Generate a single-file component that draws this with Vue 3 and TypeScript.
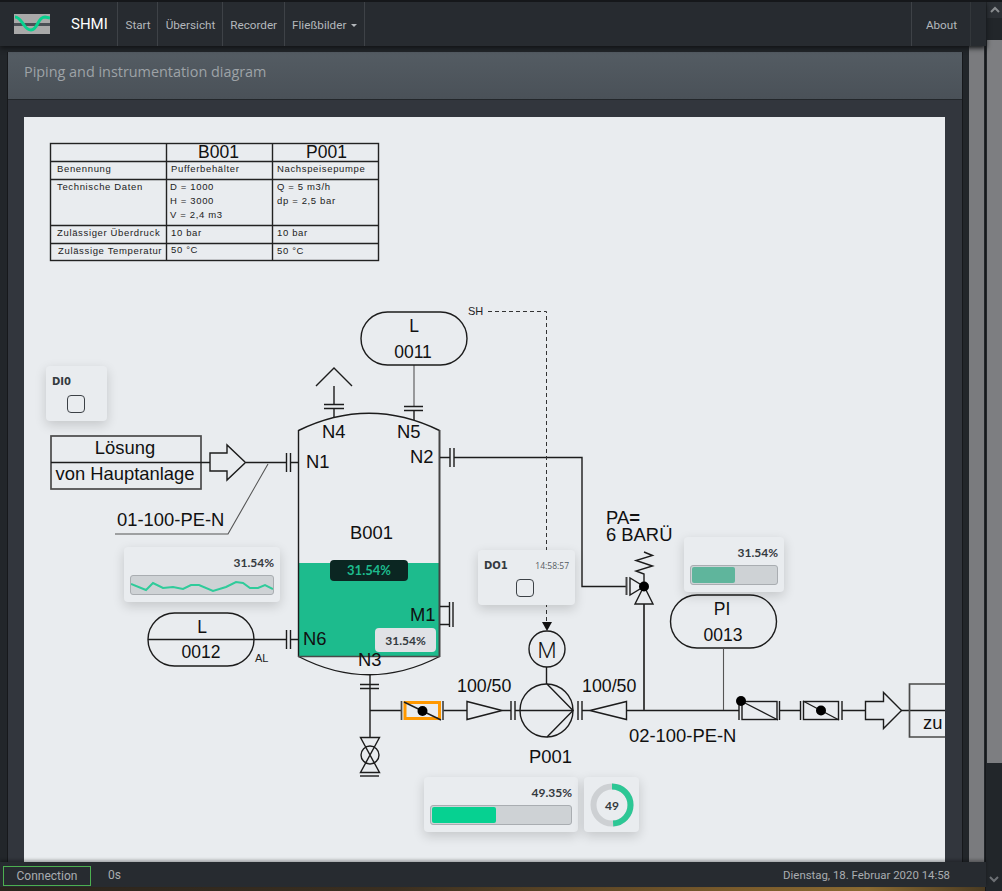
<template>
  <div class="app">
    <div class="page">
      <nav class="navbar">
        <div class="brand">
          <svg class="logo" width="36" height="20" viewBox="0 0 36 20">
            <rect width="36" height="20" fill="#a9a9a9" />
            <rect y="9" width="36" height="3" fill="#4a4f55" />
            <path d="M1 3C5 3 7 7 10 11C12 14 14 16 17 16C20 16 22 13 24 9C26 5 28 3 31 3L36 4" fill="none" stroke="#08d08e" stroke-width="3" />
          </svg>
          <span class="brand-name">SHMI</span>
        </div>
        <a v-for="item in navItems" :key="item" class="nav-item">{{ item }}</a>
        <a class="nav-item">Fließbilder<i class="caret"></i></a>
        <span class="nav-gap"></span>
        <a class="nav-item nav-about">About</a>
      </nav>

      <div class="workspace">
        <section class="card">
          <header class="card-head">Piping and instrumentation diagram</header>
          <div class="card-body">
            <div class="diagram">
              <svg class="pid" width="921" height="745" viewBox="24 117 921 745">
                <!-- datasheet table -->
                <g class="tbl">
                  <rect x="50.5" y="143.5" width="328" height="117" />
                  <path d="M50 161.5H379M50 179.5H379M50 225.5H379M50 243.5H379M166.5 143V261M272.5 143V261" />
                </g>
                <text class="big" x="198" y="158">B001</text>
                <text class="big" x="306" y="158">P001</text>
                <g class="small">
                  <text x="57" y="172">Benennung</text>
                  <text x="171" y="172">Pufferbehälter</text>
                  <text x="277" y="172">Nachspeisepumpe</text>
                  <text x="57" y="190">Technische Daten</text>
                  <text x="170" y="190">D = 1000</text>
                  <text x="170" y="204">H = 3000</text>
                  <text x="170" y="218">V = 2,4 m3</text>
                  <text x="277" y="190">Q = 5 m3/h</text>
                  <text x="277" y="204">dp = 2,5 bar</text>
                  <text x="57" y="236">Zulässiger Überdruck</text>
                  <text x="171" y="236">10 bar</text>
                  <text x="277" y="236">10 bar</text>
                  <text x="58" y="254">Zulässige Temperatur</text>
                  <text x="171" y="253">50 °C</text>
                  <text x="277" y="254">50 °C</text>
                </g>

                <!-- tank -->
                <rect x="299" y="563" width="141" height="93" fill="#1dbb8d" />
                <path class="ln" d="M298.5 430.5Q369 396 439.5 430.5" />
                <path class="ln" d="M298.5 656.5Q369 693 439.5 656.5" />
                <path class="ln" d="M298.5 430V657" />
                <path class="ln heavy" d="M439.5 430V657" />
                <path class="grey" d="M298 656.5H440" />

                <!-- nozzles on top -->
                <path class="ln" d="M334 386V404M334 408V418M324 404.5H344M324 408.5H344" />
                <path class="ln" d="M316 386L334 368L352 386" />
                <path class="thin" d="M414 365V406" />
                <path class="ln" d="M414 410V420M404 406.5H423M404 410.5H423" />
                <rect class="ln" x="361" y="312" width="106" height="53" rx="26.5" />

                <!-- inlet -->
                <rect class="box" x="51" y="436" width="150" height="53" />
                <path class="ln" d="M51 462.5H210M246 462.5H286M290 462.5H298M286.5 453V472M290.5 453V472" />
                <polygon class="ln" points="210,453 227,453 227,445 245.5,462.5 227,480 227,471 210,471" />
                <path class="thin" d="M268 464L228 534H115" />

                <!-- L 0012 -->
                <rect class="ln" x="148" y="613" width="106" height="53" rx="26.5" />
                <path class="ln" d="M148 639.5H286M290 639.5H298M286.5 630V649M290.5 630V649" />

                <!-- M1 -->
                <path class="ln" d="M440 606.5H449M440 624.5H449M449.5 602V627M453 602V627" />

                <!-- outlet from N2 -->
                <path class="ln" d="M440 457.5H450M454 457.5H582V586.5H626M450 448V467M454 448V467" />

                <!-- SH signal line -->
                <path class="dash" d="M488 311.5H546.5V622" />
                <polygon points="542,622 552,622 547,631" fill="#111" />

                <!-- motor and pump -->
                <circle class="ln" cx="547" cy="649" r="18" />
                <path class="ln" d="M546.5 667V684" />
                <circle class="ln" cx="546.5" cy="710.5" r="26.5" />
                <path class="ln" d="M547 684L573 710.5L547 737" />

                <!-- bottom nozzle and drain valve -->
                <path class="ln" d="M370 675V737M360 684.5H379M360 688.5H379" />
                <path class="ln" d="M360.5 737.5H379.5L360.5 772.5H379.5Z" />
                <circle class="ln" cx="370" cy="755" r="9" />
                <path class="ln" d="M360 776H379" />

                <!-- main pipe -->
                <path class="ln" d="M370 710.5H402M443 710.5H467M502 710.5H511M515 710.5H573M582 710.5H590M627 710.5H739M780 710.5H800M842 710.5H865M901 710.5H945" />
                <rect class="hl" x="405" y="702.5" width="34.5" height="16" />
                <path class="ln" d="M404 702L441 720" />
                <circle cx="422.5" cy="711" r="5" fill="#000" />
                <path class="grey" d="M401.5 701V720M443 701V720" />
                <polygon class="ln" points="467,701.5 467,719.5 502,710.5" />
                <path class="ln" d="M511 701V720M515 701V720M578 701V720M582 701V720" />
                <polygon class="ln" points="590,710.5 626.5,701.5 626.5,719.5" />

                <!-- safety valve -->
                <path class="ln heavy" d="M644 710V604" />
                <polygon class="ln" points="644,586 653,604 635,604" />
                <path class="ln heavy" d="M626.5 577V595" />
                <polygon class="ln" points="630,578 630,595 644,586.5" />
                <path class="ln" d="M644 552L652.5 555.5L636 560.5L652.5 566L636 571L644 574V582" />
                <circle cx="644" cy="586.5" r="5" fill="#000" />

                <!-- PI 0013 -->
                <rect class="ln" x="670.5" y="595" width="106" height="53" rx="26.5" />
                <path class="thin" d="M723.5 648V710" />

                <!-- outlet valves -->
                <rect class="ln" x="742" y="701.5" width="35" height="18" />
                <path class="ln" d="M741 701L778 720M739 701V720M779.5 701V720" />
                <circle cx="741" cy="701" r="5" fill="#000" />
                <rect class="ln" x="803.5" y="701.5" width="35" height="18" />
                <path class="ln" d="M803 701L839 720M800.5 701V720M842 701V720" />
                <circle cx="821" cy="710.5" r="5" fill="#000" />
                <polygon class="ln" points="865.5,701.5 883.5,701.5 883.5,692.5 901.5,710.5 883.5,728.5 883.5,719.5 865.5,719.5" fill="#e9ecef" />
                <path class="grey" d="M945 684H909.5V737H945" />

                <!-- labels -->
                <g class="lbl">
                  <text class="pill" x="414" y="332">L</text>
                  <text class="pill" x="413" y="358">0011</text>
                  <text x="322" y="438">N4</text>
                  <text x="397" y="438">N5</text>
                  <text x="410" y="463">N2</text>
                  <text x="306" y="468">N1</text>
                  <text x="350" y="539">B001</text>
                  <text x="410" y="621">M1</text>
                  <text x="303" y="645">N6</text>
                  <text x="358" y="666">N3</text>
                  <text x="125" y="454" text-anchor="middle">Lösung</text>
                  <text x="125" y="480" text-anchor="middle">von Hauptanlage</text>
                  <text x="117" y="526">01-100-PE-N</text>
                  <text class="pill" x="202" y="633">L</text>
                  <text class="pill" x="201" y="658">0012</text>
                  <text x="606" y="524">PA<tspan class="bold">=</tspan></text>
                  <text x="606" y="541">6 BARÜ</text>
                  <text class="pill" x="722" y="615">PI</text>
                  <text class="pill" x="723" y="641">0013</text>
                  <text class="reducer" x="457" y="692">100/50</text>
                  <text class="reducer" x="582" y="692">100/50</text>
                  <text x="529" y="763">P001</text>
                  <text x="629" y="742">02-100-PE-N</text>
                  <text x="923" y="729">zu</text>
                  <text class="motor" x="547" y="658" text-anchor="middle">M</text>
                </g>
                <text class="tiny" x="468" y="315">SH</text>
                <text class="tiny" x="255" y="662">AL</text>
              </svg>

              <!-- widgets over the drawing -->
              <div class="widget w-di0">
                <span class="tag">DI0</span>
                <span class="check"></span>
              </div>
              <div class="widget w-spark">
                <span class="pct">31.54%</span>
                <div class="meter">
                  <svg width="144" height="20" viewBox="0 0 144 20">
                    <polyline :points="sparkPoints" fill="none" stroke="#2fcb9a" stroke-width="2" />
                  </svg>
                </div>
              </div>
              <span class="tank-dark">31.54%</span>
              <span class="tank-light">31.54%</span>
              <div class="widget w-do1">
                <div class="do-head">
                  <span class="tag">DO1</span>
                  <span class="time">14:58:57</span>
                </div>
                <span class="check"></span>
              </div>
              <div class="widget w-pi">
                <span class="pct">31.54%</span>
                <div class="meter"><i class="fill fill-muted" :style="{ width: '43px' }"></i></div>
              </div>
              <div class="widget w-pump">
                <span class="pct">49.35%</span>
                <div class="meter"><i class="fill" :style="{ width: '64px' }"></i></div>
              </div>
              <div class="widget w-gauge">
                <svg width="44" height="44" viewBox="0 0 44 44">
                  <circle cx="22" cy="22" r="18.5" fill="none" stroke="#cdd0d3" stroke-width="6" />
                  <circle
                    cx="22"
                    cy="22"
                    r="18.5"
                    fill="none"
                    stroke="#2cc795"
                    stroke-width="6"
                    pathLength="100"
                    stroke-dasharray="49 51"
                    transform="rotate(-90 22 22)"
                  />
                  <text class="gauge-text" x="22" y="26.5" text-anchor="middle">49</text>
                </svg>
              </div>
            </div>
          </div>
        </section>
        <div class="inner-scroll"><div class="inner-thumb"></div></div>
      </div>

      <footer class="statusbar">
        <span class="conn">Connection</span>
        <span class="uptime">0s</span>
        <span class="date">Dienstag, 18. Februar 2020 14:58</span>
      </footer>
      <div class="desktop-strip"></div>
    </div>

    <aside class="outer-scroll">
      <div class="scroll-btn">
        <svg width="10" height="8" viewBox="0 0 10 8"><path d="M1 6L5 2L9 6" fill="none" stroke="#8a8d90" stroke-width="2" /></svg>
      </div>
      <div class="outer-thumb"></div>
      <svg class="arrow-down" width="10" height="8" viewBox="0 0 10 8"><path d="M1 2L5 6L9 2" fill="none" stroke="#6d7074" stroke-width="2" /></svg>
    </aside>
  </div>
</template>

<script setup lang="ts">
const navItems: string[] = ['Start', 'Übersicht', 'Recorder']

// sampled trend of the level sensor, x/y inside the meter
const spark: Array<[number, number]> = [
  [1, 9], [16, 15], [23, 8], [33, 13], [43, 12], [53, 14], [61, 10], [69, 10],
  [83, 16], [96, 12], [106, 7], [113, 8], [120, 13], [128, 13], [135, 10], [143, 14],
]
const sparkPoints = spark.map((p) => p.join(',')).join(' ')
</script>

<style>
html,
body {
  margin: 0;
  background: #22262a;
  overflow: hidden;
}
</style>

<style scoped>
.app {
  display: flex;
  width: 1002px;
  height: 891px;
  overflow: hidden;
  font-family: Roboto, "Open Sans", sans-serif;
  background: #22262a;
}

.page {
  display: flex;
  flex-direction: column;
  width: 986px;
  height: 891px;
}

.navbar {
  display: flex;
  align-items: stretch;
  flex: none;
  height: 44px;
  margin-top: 2px;
  padding-right: 15px;
  box-sizing: border-box;
  background: #272b30;
  box-shadow: 0 -2px 0 #15171a, 0 2px 5px #111315;
  position: relative;
  z-index: 2;
  font-size: 11.7px;
}

.brand {
  display: flex;
  align-items: center;
  width: 118px;
  flex: none;
  padding-left: 14px;
  box-sizing: border-box;
  border-right: 1px solid #3e4247;
}

.brand-name {
  margin-left: 21px;
  color: #fff;
  font-size: 15px;
}

.nav-item {
  display: flex;
  align-items: center;
  padding: 2px 6.5px 0 7.5px;
  color: #b4b8bc;
  border-right: 1px solid #3e4247;
}

.nav-about {
  padding: 2px 13px 0 14px;
  border-left: 1px solid #3e4247;
  border-right: 1px solid #33373b;
}

.nav-gap {
  flex: 1;
}

.caret {
  margin-left: 5px;
  border: 3px solid transparent;
  border-top-color: #b4b8bc;
  border-bottom: 0;
}

.workspace {
  display: flex;
  flex: 1;
  min-height: 0;
  padding-top: 6px;
  background: #22262a;
}

.card {
  display: flex;
  flex-direction: column;
  width: 954px;
  margin-left: 8px;
  flex: none;
  background: #32363d;
  box-shadow: -1px 0 0 #16181b, 1px 0 0 #16181b;
}

.card-head {
  flex: none;
  height: 48px;
  padding: 10px 16px 0;
  box-sizing: border-box;
  font-family: "Open Sans", sans-serif;
  font-size: 14.4px;
  line-height: 20px;
  color: #9ea3a7;
  background: linear-gradient(#545c63, #4a5158);
  border-bottom: 1px solid #23272b;
}

.card-body {
  flex: 1;
  min-height: 0;
  padding: 17px 17px 0 16px;
  overflow: hidden;
}

.diagram {
  position: relative;
  width: 921px;
  height: 745px;
  background: #e9ecef;
  overflow: hidden;
}

.pid {
  display: block;
}

.tbl {
  fill: none;
  stroke: #222;
  stroke-width: 1.4;
}

.ln,
.hl,
.box,
.grey,
.thin,
.dash {
  fill: none;
}

.ln {
  stroke: #1c1c1c;
  stroke-width: 1.4;
}

.heavy {
  stroke: #444;
  stroke-width: 2;
}

.grey,
.box {
  stroke: #4a4a4a;
  stroke-width: 1.7;
}

.thin {
  stroke: #555;
  stroke-width: 1.1;
}

.dash {
  stroke: #333;
  stroke-width: 1;
  stroke-dasharray: 4 3;
}

.hl {
  stroke: #ff9800;
  stroke-width: 3;
}

.lbl text {
  font-family: "Liberation Sans", Arial, sans-serif;
  font-size: 18.4px;
  fill: #111;
}

.lbl .pill {
  font-size: 17.5px;
  text-anchor: middle;
}

.lbl .reducer {
  font-size: 17.8px;
}

.lbl .motor {
  font-family: Roboto, sans-serif;
  font-size: 22px;
  font-weight: 300;
}

.bold {
  font-weight: 700;
}

.big {
  font-family: "Liberation Sans", Arial, sans-serif;
  font-size: 17.5px;
  fill: #111;
}

.small text {
  font-family: "Liberation Sans", Arial, sans-serif;
  font-size: 9.5px;
  letter-spacing: 0.65px;
  fill: #222;
}

.tiny {
  font-family: "Liberation Sans", Arial, sans-serif;
  font-size: 11px;
  fill: #222;
}

.widget {
  position: absolute;
  box-sizing: border-box;
  background: #e9ecef;
  border-radius: 4px;
  box-shadow: 0 4px 12px rgba(0, 0, 0, 0.16);
  color: #343a40;
}

.tag {
  font-family: "DejaVu Sans", sans-serif;
  font-size: 10px;
  font-weight: 700;
  color: #343a40;
}

.check {
  display: block;
  width: 18px;
  height: 18px;
  box-sizing: border-box;
  border: 1px solid #3c4146;
  border-radius: 4px;
}

.w-di0 {
  left: 22px;
  top: 249px;
  width: 61px;
  height: 55px;
  padding: 9px 6px;
}

.w-di0 .tag {
  display: block;
  line-height: 14px;
}

.w-di0 .check {
  margin: 6px 0 0 15px;
}

.pct {
  display: block;
  font-family: Lato, "Open Sans", sans-serif;
  font-size: 12px;
  font-weight: 700;
  line-height: 14px;
  text-align: right;
  color: #343a40;
}

.meter {
  height: 20px;
  box-sizing: border-box;
  margin-top: 5px;
  padding: 1px;
  background: #ced2d5;
  border: 1px solid #a9adb1;
  border-radius: 3px;
  overflow: hidden;
}

.meter svg {
  display: block;
  margin: -2px;
}

.fill {
  display: block;
  height: 16px;
  background: #06d191;
  border-radius: 2px;
}

.fill-muted {
  background: #5fb59c;
}

.w-spark {
  left: 100px;
  top: 430px;
  width: 156px;
  height: 55px;
  padding: 9px 6px 0;
}

.w-pi {
  left: 660px;
  top: 420px;
  width: 100px;
  height: 55px;
  padding: 9px 6px 0;
}

.w-pump {
  left: 400px;
  top: 660px;
  width: 154px;
  height: 55px;
  padding: 9px 6px 0;
}

.w-gauge {
  display: flex;
  align-items: center;
  justify-content: center;
  left: 560px;
  top: 660px;
  width: 55px;
  height: 55px;
}

.gauge-text {
  font-family: Lato, "Open Sans", sans-serif;
  font-size: 12px;
  font-weight: 700;
  fill: #343a40;
}

.tank-dark,
.tank-light {
  position: absolute;
  box-sizing: border-box;
  font-family: Lato, "Open Sans", sans-serif;
  font-weight: 700;
  text-align: center;
}

.tank-dark {
  left: 306px;
  top: 443px;
  width: 78px;
  height: 21px;
  font-size: 13px;
  line-height: 20px;
  color: #1dbb8d;
  background: #0b2622;
  border-radius: 4px;
}

.tank-light {
  left: 351px;
  top: 511px;
  width: 61px;
  height: 24px;
  font-size: 12px;
  line-height: 25px;
  color: #343a40;
  background: #e0e2e6;
  border-radius: 4px;
}

.w-do1 {
  left: 454px;
  top: 433px;
  width: 97px;
  height: 55px;
  padding: 8px 6px;
}

.do-head {
  display: flex;
  justify-content: space-between;
  align-items: center;
  height: 14px;
}

.time {
  font-family: "Open Sans", sans-serif;
  font-size: 8.5px;
  color: #555b61;
}

.w-do1 .check {
  margin: 7px 0 0 32px;
}

.inner-scroll {
  width: 16px;
  margin: -6px 0 0 7px;
  flex: none;
}

.inner-thumb {
  width: 15px;
  height: 100%;
  background: #7a7b7e;
}

.statusbar {
  display: flex;
  align-items: center;
  flex: none;
  height: 25px;
  padding: 0 36px 0 3px;
  box-sizing: border-box;
  background: #272b30;
  box-shadow: 0 -2px 3px rgba(0, 0, 0, 0.3);
  position: relative;
  z-index: 2;
  font-size: 12px;
  color: #a9adb1;
}

.conn {
  width: 88px;
  height: 20px;
  margin-top: 3px;
  box-sizing: border-box;
  border: 1px solid #4caf50;
  line-height: 19px;
  text-align: center;
}

.uptime {
  margin-left: 17px;
}

.date {
  margin-left: auto;
  font-size: 11.4px;
}

.desktop-strip {
  flex: none;
  height: 4px;
  background: linear-gradient(90deg, #2a241d, #3b2f20 40%, #7a5c2c 75%, #8a6a32 88%, #4a3b22);
}

.outer-scroll {
  position: relative;
  width: 16px;
  flex: none;
  background: #22262a;
  box-shadow: -1px 0 0 #16181b;
  border-top: 2px solid #15171a;
  box-sizing: border-box;
}

.scroll-btn {
  display: flex;
  align-items: center;
  justify-content: center;
  height: 16px;
  margin-left: 1px;
  background: #2c3035;
}

.arrow-down {
  position: absolute;
  left: 3px;
  top: 873px;
}

.outer-thumb {
  width: 15px;
  height: 723px;
  margin: 22px 0 0 1px;
  background: #7d7e81;
}
</style>
